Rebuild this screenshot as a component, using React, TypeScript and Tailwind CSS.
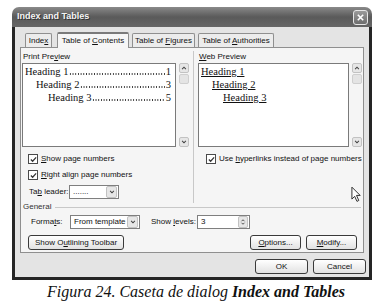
import React from "react";

// underlined access key letter
const K = ({ children }: { children: React.ReactNode }) => (
  <span className="underline underline-offset-[1px]">{children}</span>
);

function Button({ children, w }: { children: React.ReactNode; w: string }) {
  return (
    <div
      className={`${w} h-[15px] rounded-[3px] border border-[#3a3a3a] bg-gradient-to-b from-white to-[#e2e2e2] flex items-center justify-center text-[8px] text-[#111]`}
    >
      <span className="whitespace-nowrap">{children}</span>
    </div>
  );
}

function Tab({ children, active }: { children: React.ReactNode; active?: boolean }) {
  return (
    <div
      className={
        active
          ? "w-[72px] h-[16px] -mb-px border border-b-0 border-[#8f8f8f] border-t-[2px] border-t-[#7a7a7a] rounded-t-[2px] bg-[#f6f6f6] flex items-center justify-center relative z-10"
          : "h-[14px] border border-b-0 border-[#8f8f8f] rounded-t-[2px] bg-[#ececec] flex items-center justify-center"
      }
    >
      <span className="whitespace-nowrap">{children}</span>
    </div>
  );
}

function Check({ children }: { children: React.ReactNode }) {
  return (
    <div className="flex items-center h-[10px]">
      <div className="w-[10px] h-[10px] border border-[#4a4a4a] bg-white flex items-center justify-center">
        <svg viewBox="0 0 8 8" className="w-[7px] h-[7px]">
          <path d="M1 4 L3 6 L7 1.5" stroke="#333" strokeWidth="1.4" fill="none" />
        </svg>
      </div>
      <span className="ml-[3px] text-[8px] leading-[10px] whitespace-nowrap">{children}</span>
    </div>
  );
}

function Arrow({ up }: { up?: boolean }) {
  return (
    <svg viewBox="0 0 8 8" className="w-[6px] h-[6px]">
      <path
        d={up ? "M1.5 5.5 L4 3 L6.5 5.5" : "M1.5 2.5 L4 5 L6.5 2.5"}
        stroke="#444"
        strokeWidth="1.4"
        fill="none"
      />
    </svg>
  );
}

function ScrollBtn({ up }: { up?: boolean }) {
  return (
    <div className="w-[10px] h-[10px] rounded-[2px] border border-[#c2c2c2] bg-[#e6e6e6] flex items-center justify-center">
      <Arrow up={up} />
    </div>
  );
}

function Scrollbar() {
  return (
    <div className="w-[10px] h-full flex flex-col">
      <ScrollBtn up />
      <div className="w-[10px] h-[10px] mt-px rounded-[2px] border border-[#cfcfcf] bg-[#e4e4e4]" />
      <div className="flex-1" />
      <ScrollBtn />
    </div>
  );
}

function DropBtn() {
  return (
    <div className="w-[11px] h-[12px] mr-px shrink-0 rounded-[2px] border border-[#c2c2c2] bg-[#e6e6e6] flex items-center justify-center">
      <Arrow />
    </div>
  );
}

// dotted tab leader drawn as a repeating dot background
function TocLine({ text, num, pad }: { text: string; num: string; pad: string }) {
  return (
    <div className={`flex items-center h-[13px] leading-[13px] ${pad}`}>
      <span className="whitespace-nowrap">{text}</span>
      <span className="flex-1 self-end mb-[3px] mx-[1px] h-[2px] bg-[radial-gradient(circle,#333_35%,transparent_60%)] bg-[length:2.7px_2px] bg-repeat-x" />
      <span>{num}</span>
    </div>
  );
}

export default function App() {
  return (
    <div className="w-[383px] h-[307px] bg-white relative overflow-hidden font-['Liberation_Sans',Arial,sans-serif] text-[#111]">
      <div className="pt-[7px] pl-[12px]">
        {/* --- dialog frame --- */}
        <div className="w-[360px] h-[273px] rounded-t-[7px] overflow-hidden flex flex-col">
          {/* title bar */}
          <div className="h-[20px] bg-gradient-to-b from-[#8a8a8a] via-[#5a5a5a] to-[#666] flex items-center pl-[5px] pr-[4px]">
            <span className="text-[9px] font-bold text-[#f4f4f4] [text-shadow:1px_1px_0_#333]">
              Index and Tables
            </span>
            <div className="ml-auto w-[15px] h-[15px] rounded-[3px] border border-[#e6e6e6] bg-gradient-to-b from-[#9a9a9a] to-[#6e6e6e] flex items-center justify-center">
              <svg viewBox="0 0 10 10" className="w-[9px] h-[9px]">
                <path d="M2 2 L8 8 M8 2 L2 8" stroke="#fff" strokeWidth="1.8" />
              </svg>
            </div>
          </div>

          {/* body */}
          <div className="flex-1 border-x-[3px] border-b-[3px] border-[#252525] bg-[#e4e4e4] px-[5px] pt-[5px] flex flex-col">
            {/* tabs */}
            <div className="flex items-end h-[15px] text-[8px]">
              <div className="ml-[5px] w-[27px]">
                <Tab>
                  Inde<K>x</K>
                </Tab>
              </div>
              <div className="ml-[5px]">
                <Tab active>
                  Table of <K>C</K>ontents
                </Tab>
              </div>
              <div className="ml-[3px] w-[63px]">
                <Tab>
                  Table of <K>F</K>igures
                </Tab>
              </div>
              <div className="ml-[3px] w-[76px]">
                <Tab>
                  Table of <K>A</K>uthorities
                </Tab>
              </div>
            </div>

            {/* tab panel */}
            <div className="h-[206px] border border-[#8f8f8f] bg-[#f5f5f5] px-[1px] flex flex-col text-[8px]">
              <div className="flex h-[154px]">
                {/* print preview */}
                <div className="w-[167px] flex flex-col">
                  <div className="mt-[4px] h-[10px] leading-[10px] pl-px">
                    Print Pre<K>v</K>iew
                  </div>
                  <div className="mt-px h-[84px] flex">
                    <div className="w-[154px] h-full border border-[#7a7a7a] bg-white font-['Liberation_Serif','Times_New_Roman',serif] text-[10.5px] text-[#111] pt-[1px] pr-[4px]">
                      <TocLine text="Heading 1" num="1" pad="pl-[2px]" />
                      <TocLine text="Heading 2" num="3" pad="pl-[13px]" />
                      <TocLine text="Heading 3" num="5" pad="pl-[25px]" />
                    </div>
                    <div className="ml-[3px]">
                      <Scrollbar />
                    </div>
                  </div>
                  <div className="mt-[7px] pl-[6px] flex flex-col gap-[6px]">
                    <Check>
                      <K>S</K>how page numbers
                    </Check>
                    <Check>
                      <K>R</K>ight align page numbers
                    </Check>
                  </div>
                  <div className="mt-[4px] pl-[7px] flex items-center h-[15px]">
                    <span className="w-[40px] whitespace-nowrap">
                      Ta<K>b</K> leader:
                    </span>
                    <div className="w-[50px] h-[14px] border border-[#7f7f7f] bg-white flex items-center">
                      <span className="flex-1 pl-[3px] leading-[8px]">.......</span>
                      <DropBtn />
                    </div>
                  </div>
                </div>

                {/* separator */}
                <div className="ml-[4px] mt-[3px] w-px h-[152px] bg-[#c8c8c8]" />

                {/* web preview */}
                <div className="ml-[4px] flex-1 flex flex-col">
                  <div className="mt-[4px] h-[10px] leading-[10px] pl-px">
                    <K>W</K>eb Preview
                  </div>
                  <div className="mt-px h-[84px] flex">
                    <div className="w-[151px] h-full border border-[#7a7a7a] bg-white font-['Liberation_Serif','Times_New_Roman',serif] text-[10.5px] text-[#111] pt-[1px] leading-[13px]">
                      <div className="pl-[2px] h-[13px]"><span className="underline">Heading 1</span></div>
                      <div className="pl-[13px] h-[13px]"><span className="underline">Heading 2</span></div>
                      <div className="pl-[24px] h-[13px]"><span className="underline">Heading 3</span></div>
                    </div>
                    <div className="ml-[3px]">
                      <Scrollbar />
                    </div>
                  </div>
                  <div className="mt-[7px] pl-[8px]">
                    <Check>
                      Use <K>h</K>yperlinks instead of page numbers
                    </Check>
                  </div>
                </div>
              </div>

              {/* general group */}
              <div className="flex items-center h-[10px] pl-px">
                <span className="text-[#333]">General</span>
                <div className="ml-[4px] flex-1 mr-[1px] h-px bg-[#c8c8c8]" />
              </div>
              <div className="mt-[2px] flex items-center h-[15px] pl-[9px]">
                <span className="w-[39px] whitespace-nowrap">
                  Forma<K>t</K>s:
                </span>
                <div className="w-[70px] h-[14px] border border-[#7f7f7f] bg-white flex items-center">
                  <span className="flex-1 pl-[3px] whitespace-nowrap">From template</span>
                  <DropBtn />
                </div>
                <span className="ml-[11px] w-[46px] whitespace-nowrap">
                  Show <K>l</K>evels:
                </span>
                <div className="w-[53px] h-[14px] border border-[#7f7f7f] bg-white flex items-center">
                  <span className="flex-1 pl-[3px]">3</span>
                  <div className="w-[10px] h-[12px] mr-px rounded-[2px] border border-[#c2c2c2] bg-[#e6e6e6] flex flex-col items-center justify-center">
                    <svg viewBox="0 0 8 10" className="w-[6px] h-[8px]">
                      <path d="M2 4 L4 2 L6 4 M2 6 L4 8 L6 6" stroke="#444" strokeWidth="1.2" fill="none" />
                    </svg>
                  </div>
                </div>
              </div>
              <div className="mt-[6px] flex items-center pl-[6px] pr-[5px]">
                <Button w="w-[96px]">
                  Show O<K>u</K>tlining Toolbar
                </Button>
                <div className="ml-auto flex gap-[5px]">
                  <Button w="w-[51px]">
                    <K>O</K>ptions...
                  </Button>
                  <Button w="w-[51px]">
                    <K>M</K>odify...
                  </Button>
                </div>
              </div>
            </div>

            {/* ok / cancel */}
            <div className="mt-[6px] flex justify-end gap-[5px] mr-[-2px]">
              <Button w="w-[53px]">OK</Button>
              <Button w="w-[53px]">Cancel</Button>
            </div>
          </div>
        </div>

        {/* caption */}
        <div className="mt-[3px] pl-[35px] font-['Liberation_Serif','Times_New_Roman',serif] italic text-[16px] leading-[17px] text-[#111]">
          Figura 24. Caseta de dialog <span className="font-bold">Index and Tables</span>
        </div>
      </div>

      {/* mouse pointer */}
      <svg viewBox="0 0 12 18" className="absolute left-[351px] top-[186px] w-[11px] h-[17px]">
        <path d="M1 1 L1 14 L4 11 L6.5 16.5 L8.5 15.5 L6 10 L10 10 Z" fill="#fff" stroke="#222" strokeWidth="1" strokeLinejoin="round" />
      </svg>
    </div>
  );
}
